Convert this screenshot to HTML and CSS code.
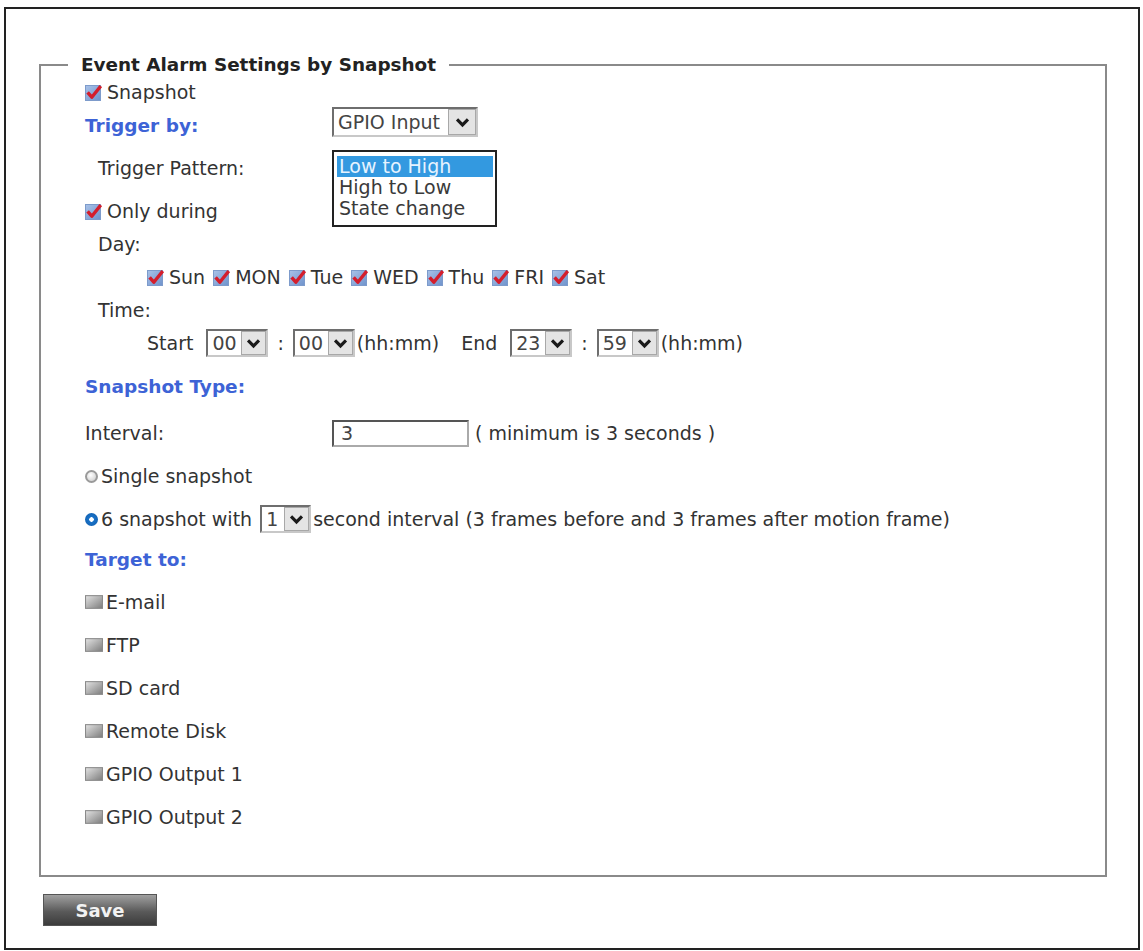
FILE: index.html
```html
<!DOCTYPE html>
<html lang="en">
<head>
  <meta charset="UTF-8" />
  <title>Event Alarm Settings by Snapshot</title>
  <link rel="stylesheet" href="styles.css">
</head>
<body>
  <svg class="defs" aria-hidden="true">
    <defs>
      <linearGradient id="gBlue" x1="0" y1="0" x2="1" y2="1">
        <stop offset="0" stop-color="#a9c2e8"/>
        <stop offset="1" stop-color="#6f93cc"/>
      </linearGradient>
      <linearGradient id="gGray" x1="0" y1="0" x2="1" y2="1">
        <stop offset="0" stop-color="#e4e4e4"/>
        <stop offset="1" stop-color="#7c7c7c"/>
      </linearGradient>
    </defs>
    <symbol id="ck" viewBox="0 0 17 17">
      <rect x="0.5" y="1.5" width="15" height="15" fill="url(#gBlue)" stroke="#7d9bcb"/>
      <path d="M2.6 8.3 L6.8 13.2 L15.8 2" fill="none" stroke="#d41e2c" stroke-width="3.4" stroke-linejoin="round"/>
    </symbol>
    <symbol id="box" viewBox="0 0 17 13">
      <rect x="0.5" y="0.5" width="16" height="12" fill="url(#gGray)" stroke="#8a8a8a"/>
    </symbol>
    <symbol id="chev" viewBox="0 0 14 14">
      <path d="M2.5 4.5 L7 9 L11.5 4.5" fill="none" stroke="#1a1a1a" stroke-width="2.6"/>
    </symbol>
  </svg>

  <div class="page">
    <fieldset class="box">
      <legend>Event Alarm Settings by Snapshot</legend>
      <div class="box-body">

        <div class="row first">
          <svg class="chk"><use href="#ck"/></svg>Snapshot
        </div>

        <div class="row tight">
          <span class="label head">Trigger by:</span>
          <span class="sel wide">
            <span class="val">GPIO Input</span>
            <span class="arr"><svg><use href="#chev"/></svg></span>
          </span>
        </div>

        <div class="row">
          <span class="label indent">Trigger Pattern:</span>
          <div class="list">
            <div class="picked">Low to High</div>
            <div>High to Low</div>
            <div>State change</div>
          </div>
        </div>

        <div class="row">
          <svg class="chk"><use href="#ck"/></svg>Only during
        </div>

        <div class="row tight">
          <span class="indent">Day:</span>
        </div>

        <div class="row tight sub">
          <span class="day"><svg class="chk"><use href="#ck"/></svg>Sun</span>
          <span class="day"><svg class="chk"><use href="#ck"/></svg>MON</span>
          <span class="day"><svg class="chk"><use href="#ck"/></svg>Tue</span>
          <span class="day"><svg class="chk"><use href="#ck"/></svg>WED</span>
          <span class="day"><svg class="chk"><use href="#ck"/></svg>Thu</span>
          <span class="day"><svg class="chk"><use href="#ck"/></svg>FRI</span>
          <span class="day"><svg class="chk"><use href="#ck"/></svg>Sat</span>
        </div>

        <div class="row tight">
          <span class="indent">Time:</span>
        </div>

        <div class="row tight sub">
          <span>Start</span>
          <span class="sel small gap">
            <span class="val">00</span>
            <span class="arr"><svg><use href="#chev"/></svg></span>
          </span>
          <span class="colon">:</span>
          <span class="sel small">
            <span class="val">00</span>
            <span class="arr"><svg><use href="#chev"/></svg></span>
          </span>
          <span class="hint">(hh:mm)</span>
          <span class="end">End</span>
          <span class="sel small gap">
            <span class="val">23</span>
            <span class="arr"><svg><use href="#chev"/></svg></span>
          </span>
          <span class="colon">:</span>
          <span class="sel small">
            <span class="val">59</span>
            <span class="arr"><svg><use href="#chev"/></svg></span>
          </span>
          <span class="hint">(hh:mm)</span>
        </div>

        <div class="row">
          <span class="head">Snapshot Type:</span>
        </div>

        <div class="row loose">
          <span class="label">Interval:</span>
          <span class="input">3</span>
          <span class="note">( minimum is 3 seconds )</span>
        </div>

        <div class="row">
          <span class="radio"></span>Single snapshot
        </div>

        <div class="row">
          <span class="radio on"></span>6 snapshot with
          <span class="sel tiny">
            <span class="val">1</span>
            <span class="arr"><svg><use href="#chev"/></svg></span>
          </span>
          second interval (3 frames before and 3 frames after motion frame)
        </div>

        <div class="row mid">
          <span class="head">Target to:</span>
        </div>

        <div class="row"><svg class="gray"><use href="#box"/></svg>E-mail</div>
        <div class="row"><svg class="gray"><use href="#box"/></svg>FTP</div>
        <div class="row"><svg class="gray"><use href="#box"/></svg>SD card</div>
        <div class="row"><svg class="gray"><use href="#box"/></svg>Remote Disk</div>
        <div class="row"><svg class="gray"><use href="#box"/></svg>GPIO Output 1</div>
        <div class="row"><svg class="gray"><use href="#box"/></svg>GPIO Output 2</div>

      </div>
    </fieldset>

    <button type="button" class="save">Save</button>
  </div>
</body>
</html>
```

FILE: styles.css
```css
* {
  box-sizing: border-box;
}

body {
  margin: 0;
  background: #fff;
  font-family: "DejaVu Sans", Verdana, sans-serif;
  font-size: 19px;
  color: #333;
}

.defs {
  position: absolute;
  width: 0;
  height: 0;
  overflow: hidden;
}

.page {
  margin: 7px 3px 0 4px;
  height: 943px;
  border: 2px solid #222;
  padding: 45px 31px 0 33px;
}

.box {
  margin: 0;
  padding: 0;
  min-width: 0;
  border: 2px solid #8a8a8a;
}

.box legend {
  margin-left: 27px;
  padding: 0 13px;
  font-size: 18.4px;
  font-weight: bold;
  line-height: 22px;
  color: #222;
}

.box-body {
  padding: 6px 0 48px 44px;
}

.row {
  display: flex;
  align-items: center;
  height: 20px;
  margin-top: 23px;
  white-space: nowrap;
}

.row.first { margin-top: 0; }
.row.tight { margin-top: 13px; }
.row.mid { margin-top: 20px; }
.row.loose { margin-top: 27px; }

.label {
  flex: none;
  width: 247px;
}

.indent {
  padding-left: 13px;
}

.sub {
  padding-left: 62px;
}

.head {
  color: #3d63d6;
  font-size: 18.5px;
  font-weight: bold;
}

/* checkboxes and radios */
.chk {
  flex: none;
  width: 17px;
  height: 17px;
  margin-right: 5px;
}

.gray {
  flex: none;
  width: 18px;
  height: 14px;
  margin-right: 3px;
}

.day {
  display: flex;
  align-items: center;
  margin-right: 8px;
}

.radio {
  flex: none;
  width: 13px;
  height: 13px;
  margin-right: 3px;
  border-radius: 50%;
  border: 2px solid #9a9a9a;
  background: radial-gradient(circle at 40% 35%, #fff, #c8c8c8);
}

.radio.on {
  border: none;
  background: radial-gradient(circle, #fff 0 2px, #1a73c9 2.5px, #0f5aa8);
}

/* drop-down lookalikes */
.sel {
  flex: none;
  display: flex;
  height: 30px;
  border: 2px solid;
  border-color: #6e6e6e #c8c8c8 #c8c8c8 #6e6e6e;
  background: #fff;
}

.sel .val {
  flex: 1;
  padding-left: 4px;
  line-height: 26px;
  color: #444;
}

.sel .arr {
  flex: none;
  width: 28px;
  display: flex;
  align-items: center;
  justify-content: center;
  background: #e4e4e4;
  border: 1px solid #a8a8a8;
}

.sel .arr svg {
  width: 17px;
  height: 17px;
}

.sel.wide {
  width: 146px;
  margin-top: -6px;
}

.sel.small {
  width: 62px;
  height: 28px;
}

.sel.small .val {
  line-height: 24px;
}

.sel.small .arr {
  width: 25px;
}

.sel.tiny {
  width: 51px;
  height: 28px;
  margin: 0 2px 0 8px;
}

.sel.tiny .val {
  line-height: 24px;
}

.sel.tiny .arr {
  width: 25px;
}

.gap {
  margin-left: 13px;
}

.colon {
  margin: 0 9px;
}

.hint {
  margin-left: 2px;
}

.end {
  margin-left: 22px;
}

/* open list of trigger patterns */
.list {
  flex: none;
  align-self: flex-start;
  margin-top: -8px;
  width: 165px;
  padding: 4px 2px 6px 3px;
  border: 2px solid #222;
  background: #fff;
  line-height: 21px;
  position: relative;
}

.list div {
  padding-left: 2px;
  color: #3a3a3a;
}

.list .picked {
  background: #3399e0;
  color: #e6f3ff;
}

.input {
  flex: none;
  width: 137px;
  height: 27px;
  padding-left: 7px;
  line-height: 23px;
  border: 2px solid;
  border-color: #555 #aaa #aaa #555;
  color: #444;
}

.note {
  margin-left: 6px;
}

.save {
  display: block;
  margin: 17px 0 0 4px;
  width: 114px;
  height: 32px;
  border: 1px solid #555;
  background: linear-gradient(#a0a0a0, #5a5a5a 55%, #3c3c3c);
  color: #f2f2f2;
  font-family: "DejaVu Sans", Verdana, sans-serif;
  font-size: 18px;
  font-weight: bold;
  cursor: pointer;
}
```
